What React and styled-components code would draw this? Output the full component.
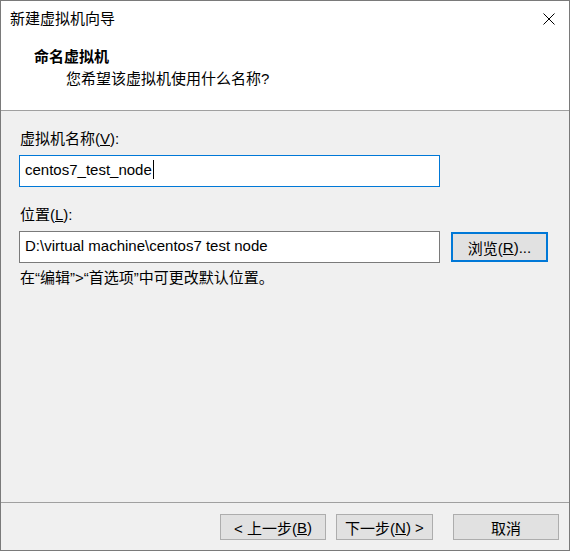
import React from "react";
import styled, { createGlobalStyle } from "styled-components";

const GlobalStyle = createGlobalStyle`
  html, body {
    margin: 0;
    padding: 0;
    background: #ffffff;
  }
  body {
    font-family: "Liberation Sans", "Noto Sans CJK SC", sans-serif;
    font-size: 15px;
    color: #000000;
  }
`;

const Window = styled.div`
  width: 570px;
  height: 551px;
  box-sizing: border-box;
  border: 1px solid #7a7a7a;
  background: #f0f0f0;
  display: flex;
  flex-direction: column;
`;

const TitleBar = styled.div`
  height: 36px;
  flex: none;
  background: #ffffff;
  display: flex;
  align-items: center;
  justify-content: space-between;
  padding: 0 14px 0 9px;
`;

const TitleText = styled.span`
  font-size: 15px;
  line-height: 20px;
`;

const CloseIcon = styled.svg`
  width: 12px;
  height: 12px;
  display: block;
`;

const Header = styled.div`
  height: 74px;
  flex: none;
  box-sizing: border-box;
  background: #ffffff;
  border-bottom: 1px solid #a0a0a0;
  padding: 9px 0 0 33px;
`;

const HeaderTitle = styled.div`
  font-weight: bold;
  line-height: 22px;
`;

const HeaderSub = styled.div`
  line-height: 22px;
  padding-left: 32px;
`;

const Body = styled.div`
  flex: 1;
  padding: 18px 21px 0 18px;
  display: flex;
  flex-direction: column;
`;

const Label = styled.div`
  line-height: 20px;
  padding-left: 1px;
  margin-top: ${(p) => p.$gap || 0}px;
  margin-bottom: 6px;
`;

const Row = styled.div`
  display: flex;
  align-items: center;
  gap: 11px;
`;

const Field = styled.div`
  width: 421px;
  height: 32px;
  flex: none;
  box-sizing: border-box;
  border: 1px solid ${(p) => (p.$focused ? "#0078d7" : "#7a7a7a")};
  background: #ffffff;
  display: flex;
  align-items: center;
  padding: 0 0 3px 5px;
  white-space: pre;
`;

const Caret = styled.span`
  display: inline-block;
  width: 1px;
  height: 19px;
  background: #000000;
  margin-left: 1px;
`;

const Hint = styled.div`
  line-height: 20px;
  margin-top: 5px;
  padding-left: 1px;
`;

const Footer = styled.div`
  flex: none;
  height: 48px;
  box-sizing: border-box;
  border-top: 1px solid #a0a0a0;
  display: flex;
  justify-content: flex-end;
  align-items: flex-start;
  padding: 11px 10px 0 0;
`;

const Button = styled.button`
  width: ${(p) => p.$w}px;
  height: ${(p) => p.$h || 26}px;
  margin-left: ${(p) => p.$gap || 0}px;
  flex: none;
  box-sizing: border-box;
  border: ${(p) => (p.$default ? "2px solid #0078d7" : "1px solid #adadad")};
  background: #e1e1e1;
  font-family: "Liberation Sans", "Noto Sans CJK SC", sans-serif;
  font-size: 15px;
  color: #000000;
  padding: 0;
  display: flex;
  align-items: center;
  justify-content: center;
  white-space: pre;
`;

export default function App() {
  return (
    <>
      <GlobalStyle />
      <Window>
        <TitleBar>
          <TitleText>新建虚拟机向导</TitleText>
          <CloseIcon viewBox="0 0 12 12">
            <path d="M0.5 0.5 L11.5 11.5 M11.5 0.5 L0.5 11.5" stroke="#000" strokeWidth="1" fill="none" />
          </CloseIcon>
        </TitleBar>
        <Header>
          <HeaderTitle>命名虚拟机</HeaderTitle>
          <HeaderSub>您希望该虚拟机使用什么名称?</HeaderSub>
        </Header>
        <Body>
          <Label>
            虚拟机名称(<u>V</u>):
          </Label>
          <Field $focused>
            centos7_test_node
            <Caret />
          </Field>
          <Label $gap={18}>
            位置(<u>L</u>):
          </Label>
          <Row>
            <Field>D:\virtual machine\centos7 test node</Field>
            <Button $w={97} $h={30} $default>
              浏览(<u>R</u>)...
            </Button>
          </Row>
          <Hint>在“编辑”&gt;“首选项”中可更改默认位置。</Hint>
        </Body>
        <Footer>
          <Button $w={106}>
            &lt; 上一步(<u>B</u>)
          </Button>
          <Button $w={97} $gap={10}>
            下一步(<u>N</u>) &gt;
          </Button>
          <Button $w={106} $gap={20}>
            取消
          </Button>
        </Footer>
      </Window>
    </>
  );
}
